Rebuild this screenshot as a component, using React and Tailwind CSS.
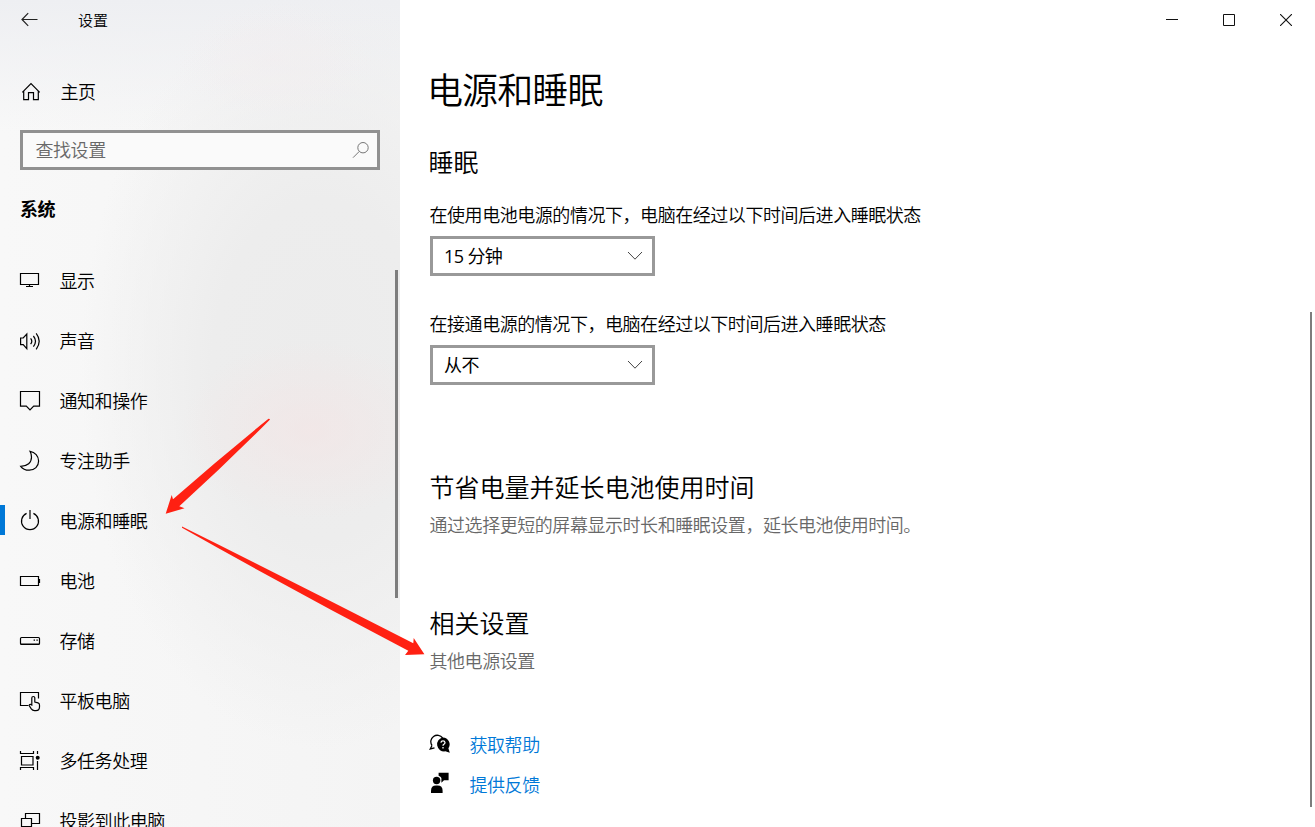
import { useState } from "react";

const Icon = ({ children }) => (
  <svg
    width="22"
    height="22"
    viewBox="0 0 22 22"
    fill="none"
    stroke="currentColor"
    strokeWidth="1.2"
    className="shrink-0"
  >
    {children}
  </svg>
);

const menuItems = [
  {
    key: "display",
    label: "显示",
    icon: (
      <Icon>
        <path d="M1.5 3.5h18v11h-18zM10.5 14.5v2M7 16.5h7" />
      </Icon>
    ),
  },
  {
    key: "sound",
    label: "声音",
    icon: (
      <Icon>
        <path d="M1.6 8h2.6l3.6-4v14.6l-3.6-4H1.6z" />
        <path d="M11.6 8.4q2.4 2.8 0 5.8M14.4 6q4.2 5.2 0 10.6M17.2 3.3q6 7.8 0 16" />
      </Icon>
    ),
  },
  {
    key: "notifications",
    label: "通知和操作",
    icon: (
      <Icon>
        <path d="M1.5 1.5h19v14.6h-5.8L11 19.8l-3.7-3.7H1.5z" />
      </Icon>
    ),
  },
  {
    key: "focus",
    label: "专注助手",
    icon: (
      <Icon>
        <path d="M11 1.3c5 .8 8.6 4.8 8.6 9.7 0 5.3-4 9.2-9.3 9.2-3.8 0-7-1.5-8.6-3.9 6.8 0 10.8-3.8 10.8-9 0-2.3-.5-4.3-1.5-6z" />
      </Icon>
    ),
  },
  {
    key: "power",
    label: "电源和睡眠",
    icon: (
      <Icon>
        <path d="M7.6 3.4a8.5 8.5 0 1 0 6.8 0M11 0v9" />
      </Icon>
    ),
  },
  {
    key: "battery",
    label: "电池",
    icon: (
      <Icon>
        <path d="M1.5 6.5h18v9h-18z" />
        <path d="M20.5 9v4" />
      </Icon>
    ),
  },
  {
    key: "storage",
    label: "存储",
    icon: (
      <Icon>
        <rect x="1.5" y="7.5" width="19" height="7" rx="1" />
        <path d="M2 13.5h18" strokeWidth="0.5" />
        <path d="M14.6 10.2h1.400M17.400 10.200h1.400" />
      </Icon>
    ),
  },
  {
    key: "tablet",
    label: "平板电脑",
    icon: (
      <Icon>
        <path d="M9.5 15.5h-8v-13h18v6" />
        <path d="M12.8 15V8a1.5 1.5 0 0 1 3 0v4l3.2.9q1.5.5 1.5 2V17q0 3.6-3.6 3.6h-1.400q-2 0-3.200-1.700l-2-3.200q-.3-1.500 1.200-1.300z" />
      </Icon>
    ),
  },
  {
    key: "multitask",
    label: "多任务处理",
    icon: (
      <Icon>
        <path d="M1.5 1v2.5h13V1M2.5 6.5h11.500v8.500H2.500zM1.500 20v-2.500h13V20M18.500 1v3M18.500 11v9" />
        <circle cx="18.700" cy="7.700" r="2" fill="currentColor" stroke="none" />
      </Icon>
    ),
  },
  {
    key: "project",
    label: "投影到此电脑",
    icon: (
      <Icon>
        <path d="M6.500 8.500v-5h14v10h-8M2.500 8.500h10v8h-10z" />
      </Icon>
    ),
  },
];

const Select = ({ value }) => (
  <button
    type="button"
    className="flex h-10 w-[225px] items-center justify-between border-[3px] border-[#999999] bg-white pr-[9px] pl-[11px] font-normal tracking-[-0.6px]"
  >
    <span>{value}</span>
    <svg width="16" height="10" viewBox="0 0 16 10" fill="none" stroke="#444" strokeWidth="1">
      <path d="M1 1l7 7.2L15 1" />
    </svg>
  </button>
);

const Sidebar = ({ active, onSelect }) => (
  <aside className="flex h-full w-[400px] shrink-0 flex-col bg-[#f5f5f5] bg-[radial-gradient(ellipse_130px_90px_at_310px_430px,#f4e4e4a0,transparent),radial-gradient(ellipse_100px_60px_at_275px_60px,#f4ecee60,transparent),radial-gradient(ellipse_240px_380px_at_320px_370px,#ececec,#ededed_45%,transparent),linear-gradient(180deg,#eeeff2,transparent_16%),linear-gradient(90deg,#f8f8f8,#f4f4f4)]">
    <div className="flex h-10 items-center pl-[21px]">
      <svg width="18" height="16" viewBox="0 0 18 16" fill="none" stroke="#222" strokeWidth="1.2">
        <path d="M1 7.5h15.5M7.2 1.2L1 7.5l6.2 6.3" />
      </svg>
      <span className="pl-[39px] text-[15px] tracking-normal">设置</span>
    </div>

    <div className="mt-7 flex h-12 items-center pl-5">
      <Icon>
        <path d="M2.3 11.3L11 2.6l8.7 8.7M3.7 10v8.6h4.8v-7h5v7h4.8V10" />
      </Icon>
      <span className="pl-[18.5px]">主页</span>
    </div>

    <div className="mx-5 mt-3.5 flex h-10 items-center justify-between border-[3px] border-[#919191] bg-[#fafafa] pr-[7px] pl-[12.5px] text-[#686868]">
      <span>查找设置</span>
      <svg width="18" height="18" viewBox="0 0 18 18" fill="none" stroke="#777" strokeWidth="1">
        <circle cx="11" cy="6.7" r="5.2" />
        <path d="M7.3 10.4L1 16.7" />
      </svg>
    </div>

    <h2 className="mt-[25px] pl-5 leading-7 font-bold">系统</h2>

    <div className="mt-7 flex min-h-0 flex-1 justify-between overflow-hidden">
      <ul>
        {menuItems.map((item) => (
          <li
            key={item.key}
            onClick={() => onSelect(item.key)}
            className="flex h-15 items-center"
          >
            <span className={active === item.key ? "mb-0.5 h-[30px] w-[5px] bg-[#0078d7]" : "w-[5px]"} />
            <span className="pl-3.5">{item.icon}</span>
            <span className="pl-[18.5px]">{item.label}</span>
          </li>
        ))}
      </ul>
      <div className="mt-[19px] mr-0.5 h-[328px] w-[3px] bg-[#7d7d7d]" />
    </div>
  </aside>
);

const WindowButtons = () => (
  <div className="flex h-10 justify-end pr-px text-[#111]">
    <button type="button" className="flex w-[57px] items-center justify-center">
      <svg width="12" height="12" viewBox="0 0 12 12" stroke="currentColor">
        <path d="M0 5.5h12" />
      </svg>
    </button>
    <button type="button" className="flex w-[57px] items-center justify-center">
      <svg width="12" height="12" viewBox="0 0 12 12" fill="none" stroke="currentColor">
        <path d="M.5.5h11v11H.5z" />
      </svg>
    </button>
    <button type="button" className="flex w-[57px] items-center justify-center">
      <svg width="12" height="12" viewBox="0 0 12 12" stroke="currentColor" strokeWidth="1.1">
        <path d="M0 0l12 12M12 0L0 12" />
      </svg>
    </button>
  </div>
);

const App = () => {
  const [active, setActive] = useState("power");

  return (
    <div className="relative flex h-[827px] w-[1315px] overflow-hidden bg-white font-['Open_Sans','Noto_Sans_CJK_SC',sans-serif] text-[18px] leading-6 font-[350] tracking-[-0.45px] text-black">
      <Sidebar active={active} onSelect={setActive} />

      <main className="flex min-w-0 flex-1 flex-col">
        <WindowButtons />
        <div className="flex flex-1 justify-between">
          <div className="pl-[30px]">
            <h1 className="-ml-[3px] pt-[27px] text-[36px] leading-12 tracking-[-0.9px]">电源和睡眠</h1>

            {/* Sleep */}
            <h2 className="-ml-[1.5px] mt-[31px] text-[25px] leading-8 tracking-normal">睡眠</h2>
            <p className="-ml-[0.5px] mt-[25px]">在使用电池电源的情况下，电脑在经过以下时间后进入睡眠状态</p>
            <div className="mt-[9px]">
              <Select value="15 分钟" />
            </div>
            <p className="-ml-[0.5px] mt-9">在接通电源的情况下，电脑在经过以下时间后进入睡眠状态</p>
            <div className="mt-[9px]">
              <Select value="从不" />
            </div>

            {/* Battery saving */}
            <h2 className="-ml-[0.5px] mt-[86px] text-[25px] leading-8 tracking-normal">节省电量并延长电池使用时间</h2>
            <p className="-ml-[0.5px] mt-[10px] text-[#686868]">
              通过选择更短的屏幕显示时长和睡眠设置，延长电池使用时间。
            </p>

            {/* Related settings */}
            <h2 className="-ml-[0.5px] mt-[70px] text-[25px] leading-8 tracking-normal">相关设置</h2>
            <p className="-ml-[0.5px] mt-[10px] text-[#686868]">其他电源设置</p>

            <div className="mt-[52px] flex h-10 items-center text-[#0078d7]">
              <svg width="22" height="22" viewBox="0 0 22 22" className="mb-0.5 -ml-px text-black">
                <path
                  d="M3 12.500A6.300 6.300 0 1 1 13.600 5M3 12.500l-1.800 3.500 4.300-1.200"
                  fill="none"
                  stroke="currentColor"
                  strokeWidth="1.3"
                />
                <path
                  d="M13.9 4.5a6.9 6.9 0 0 1 5.500 10.800l1.400 4.500-4.500-1.500A6.900 6.900 0 1 1 13.900 4.500z"
                  fill="currentColor"
                />
                <path
                  d="M11.9 9.700q.3-1.900 2.100-1.900t2 1.700q0 1.100-1.100 1.700-.9.500-.9 1.500M14 14v1.400"
                  fill="none"
                  stroke="white"
                  strokeWidth="1.3"
                />
              </svg>
              <span className="pl-[18.5px]">获取帮助</span>
            </div>
            <div className="flex h-10 items-center text-[#0078d7]">
              <svg width="22" height="22" viewBox="0 0 22 22" className="mb-1 -ml-px text-black" fill="currentColor">
                <circle cx="7.600" cy="8.500" r="3.700" />
                <path d="M2 21v-2.300Q2 13.500 7 13.500h1.600q5 0 5 5.200V21z" />
                <path d="M9.600 .7h10v7.500H15l-2.600 2.500V6.100Q11.800 4.300 9.600 3.700z" />
              </svg>
              <span className="pl-[18.5px]">提供反馈</span>
            </div>
          </div>
          <div className="mt-[272px] mr-[3px] h-[495px] w-0.5 bg-[#7d7d7d]" />
        </div>
      </main>

      {/* Arrows pointing at the menu entry and at the related link */}
      <svg
        width="1315"
        height="827"
        viewBox="0 0 1315 827"
        className="pointer-events-none absolute inset-0"
        fill="#ff2012"
      >
        <path d="M269.8 419L268.5 418.8Q221 457 173 499.3L171.7 495 165.7 513.7 184.5 508.3 179.3 506.3Q227 463 269.8 419.8z" />
        <path d="M182 526.5L182 527.8Q292 590 408.3 650.7L405 655 424.4 654.3 413.7 638 413.3 643.3Q298 584 182 526.5z" />
      </svg>
    </div>
  );
};

export default App;
